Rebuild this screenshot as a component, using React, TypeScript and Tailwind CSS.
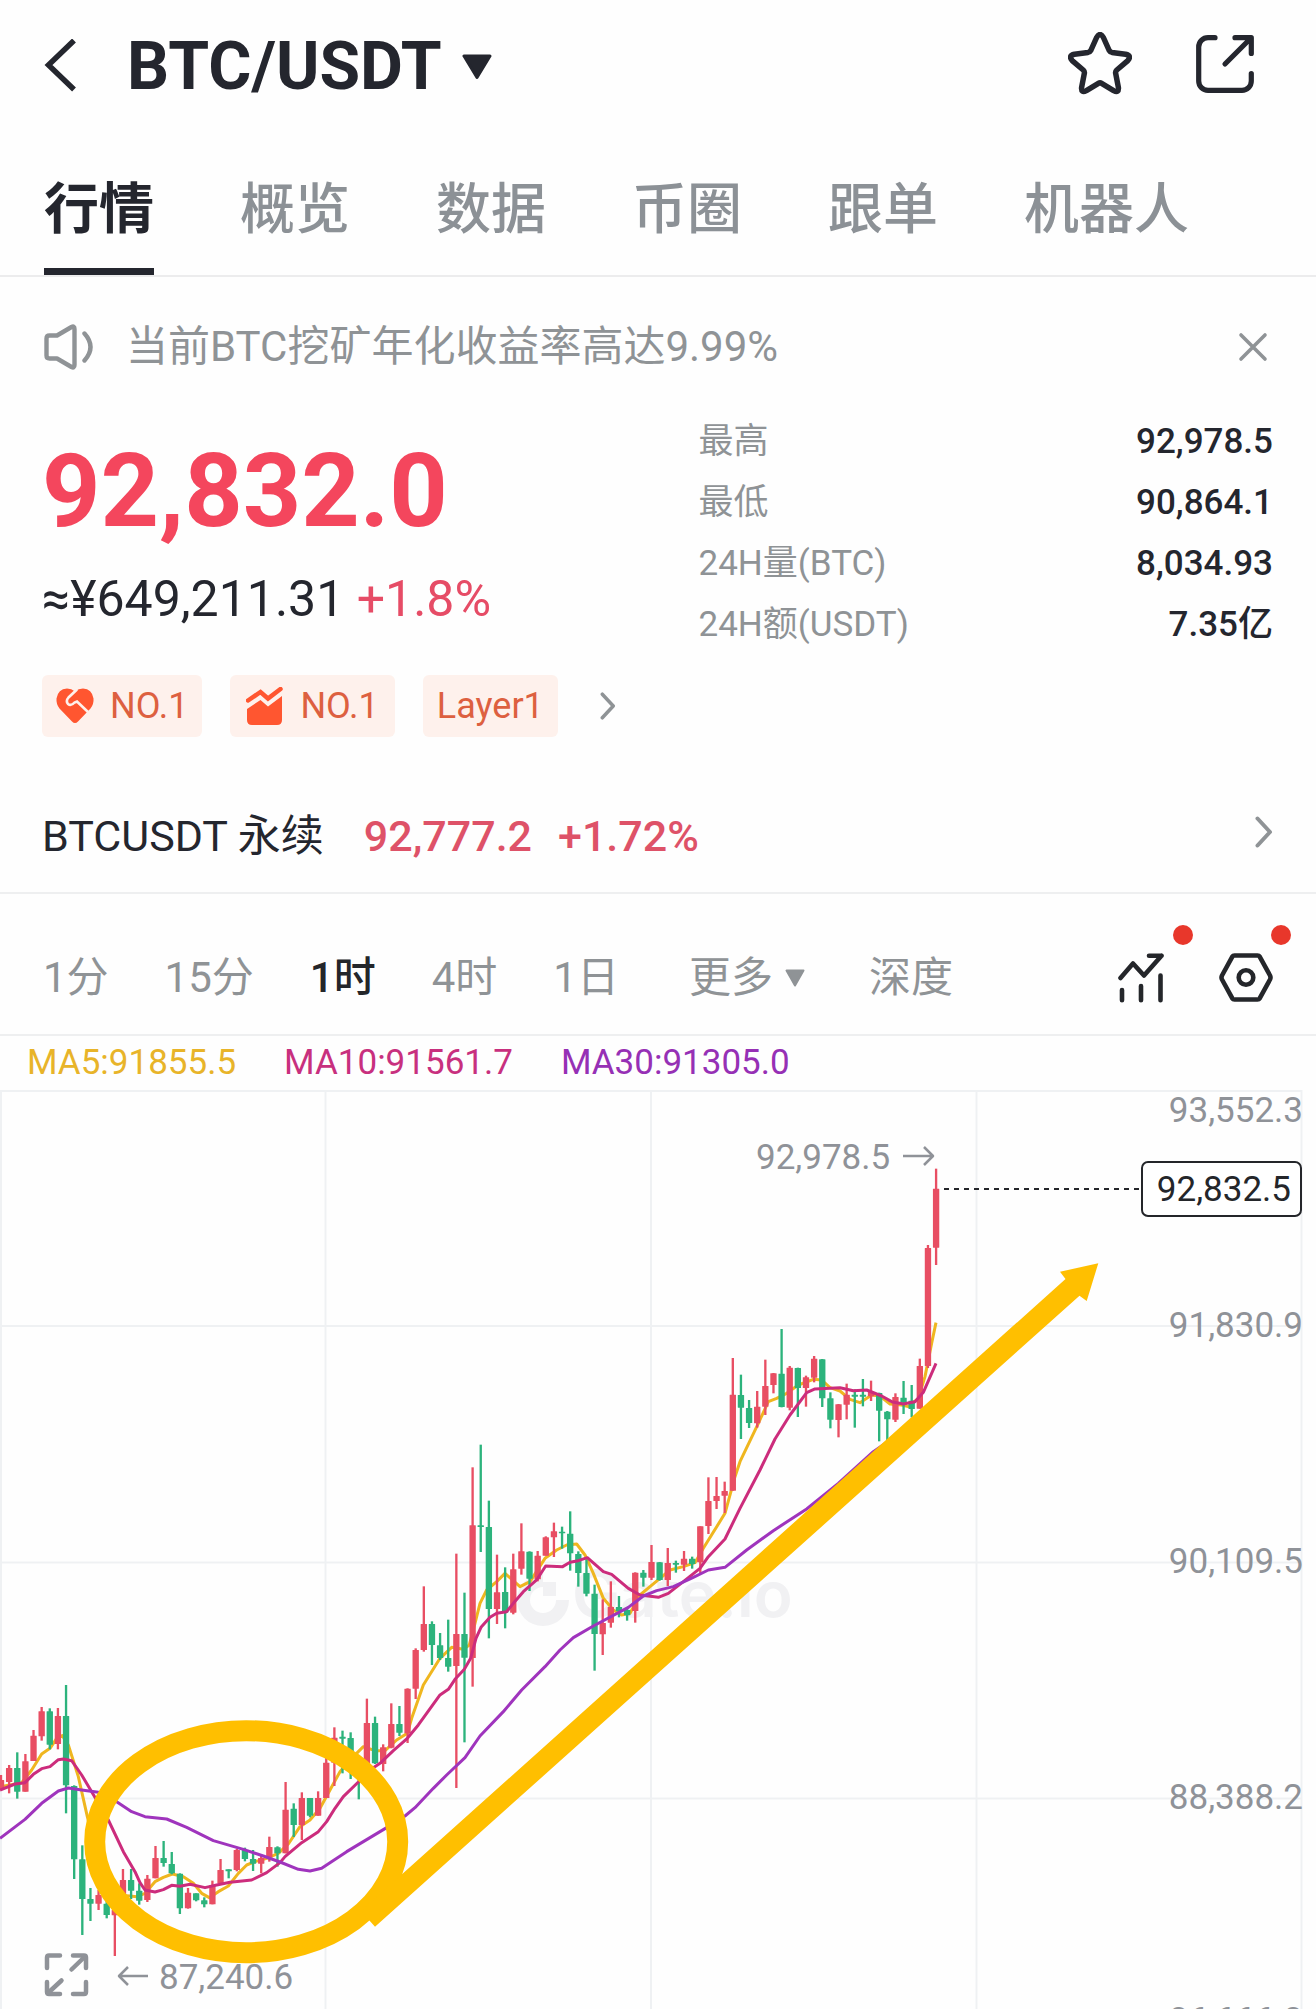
import { useState } from "react";

type Candle = [kind: "up" | "down", high: number, top: number, bottom: number, low: number];

const TABS = ["行情", "概览", "数据", "币圈", "跟单", "机器人"];
const PERIODS = ["1分", "15分", "1时", "4时", "1日"];

const STATS = [
  { label: "最高", value: "92,978.5" },
  { label: "最低", value: "90,864.1" },
  { label: "24H量(BTC)", value: "8,034.93" },
  { label: "24H额(USDT)", value: "7.35亿" },
];

const AXIS = [
  { label: "93,552.3", y: 32 },
  { label: "91,830.9", y: 247 },
  { label: "90,109.5", y: 483 },
  { label: "88,388.2", y: 719 },
  { label: "86,666.8", y: 942 },
];

// Candle and line data are kept in thirds of a chart unit.
const CANDLES: Candle[] = [
  ["up", 2055, 2070, 2098, 2100],
  ["up", 2025, 2034, 2076, 2110],
  ["down", 1987, 2034, 2105, 2126],
  ["up", 1992, 2014, 2105, 2105],
  ["up", 1920, 1937, 2013, 2013],
  ["up", 1851, 1864, 1939, 1952],
  ["down", 1855, 1864, 1964, 1978],
  ["up", 1854, 1878, 1962, 1978],
  ["down", 1785, 1878, 2086, 2170],
  ["down", 2086, 2088, 2308, 2367],
  ["down", 2266, 2308, 2427, 2535],
  ["down", 2394, 2427, 2441, 2493],
  ["up", 2400, 2415, 2441, 2460],
  ["down", 2430, 2441, 2475, 2485],
  ["up", 2450, 2460, 2476, 2598],
  ["up", 2337, 2370, 2430, 2440],
  ["down", 2337, 2370, 2402, 2427],
  ["down", 2380, 2402, 2432, 2444],
  ["up", 2355, 2366, 2430, 2436],
  ["up", 2268, 2304, 2365, 2365],
  ["down", 2253, 2304, 2319, 2330],
  ["down", 2286, 2322, 2350, 2353],
  ["down", 2350, 2351, 2455, 2472],
  ["up", 2394, 2408, 2455, 2456],
  ["down", 2410, 2410, 2431, 2434],
  ["down", 2422, 2431, 2443, 2452],
  ["up", 2372, 2385, 2443, 2443],
  ["up", 2307, 2340, 2380, 2385],
  ["down", 2338, 2338, 2344, 2365],
  ["up", 2277, 2280, 2340, 2344],
  ["down", 2273, 2280, 2307, 2314],
  ["down", 2280, 2307, 2321, 2343],
  ["up", 2298, 2304, 2321, 2350],
  ["up", 2240, 2271, 2302, 2315],
  ["down", 2269, 2272, 2290, 2330],
  ["up", 2076, 2159, 2290, 2290],
  ["down", 2140, 2156, 2205, 2241],
  ["up", 2107, 2124, 2205, 2250],
  ["down", 2124, 2124, 2177, 2182],
  ["up", 2104, 2124, 2177, 2177],
  ["up", 2000, 2018, 2124, 2124],
  ["up", 1912, 1943, 2018, 2088],
  ["down", 1922, 1940, 1946, 2050],
  ["down", 1927, 1944, 2010, 2067],
  ["down", 2000, 2010, 2050, 2128],
  ["up", 1826, 1899, 2030, 2030],
  ["down", 1880, 1899, 2020, 2022],
  ["up", 1963, 1972, 2022, 2044],
  ["up", 1840, 1902, 1973, 1975],
  ["down", 1848, 1902, 1928, 1938],
  ["up", 1795, 1796, 1930, 1959],
  ["up", 1675, 1680, 1796, 1827],
  ["up", 1489, 1602, 1680, 1685],
  ["down", 1594, 1602, 1665, 1725],
  ["down", 1629, 1666, 1704, 1710],
  ["down", 1589, 1704, 1730, 1745],
  ["up", 1391, 1632, 1728, 2094],
  ["down", 1508, 1632, 1703, 1957],
  ["up", 1132, 1306, 1704, 1790],
  ["down", 1064, 1306, 1311, 1386],
  ["down", 1232, 1311, 1557, 1645],
  ["up", 1394, 1507, 1557, 1602],
  ["down", 1432, 1506, 1568, 1615],
  ["up", 1391, 1438, 1568, 1573],
  ["up", 1300, 1384, 1436, 1454],
  ["down", 1384, 1385, 1466, 1503],
  ["up", 1383, 1397, 1468, 1474],
  ["up", 1339, 1342, 1397, 1397],
  ["up", 1298, 1324, 1342, 1401],
  ["down", 1310, 1325, 1330, 1376],
  ["down", 1264, 1331, 1390, 1442],
  ["down", 1384, 1392, 1449, 1490],
  ["down", 1408, 1449, 1511, 1519],
  ["down", 1484, 1511, 1632, 1742],
  ["up", 1528, 1599, 1633, 1695],
  ["up", 1474, 1551, 1598, 1613],
  ["down", 1518, 1551, 1564, 1582],
  ["down", 1552, 1560, 1576, 1592],
  ["up", 1447, 1448, 1563, 1598],
  ["down", 1440, 1448, 1463, 1490],
  ["up", 1365, 1416, 1463, 1470],
  ["down", 1416, 1417, 1470, 1472],
  ["up", 1374, 1419, 1470, 1488],
  ["down", 1412, 1419, 1424, 1448],
  ["up", 1383, 1406, 1424, 1443],
  ["down", 1400, 1406, 1422, 1436],
  ["up", 1309, 1309, 1417, 1450],
  ["up", 1162, 1233, 1308, 1332],
  ["up", 1161, 1218, 1233, 1257],
  ["up", 1175, 1203, 1217, 1269],
  ["up", 804, 914, 1202, 1202],
  ["down", 854, 915, 953, 1047],
  ["down", 930, 954, 999, 1014],
  ["up", 903, 950, 1000, 1013],
  ["up", 809, 888, 950, 975],
  ["up", 849, 850, 885, 910],
  ["down", 717, 851, 951, 952],
  ["up", 828, 833, 953, 961],
  ["down", 833, 834, 894, 981],
  ["up", 857, 862, 894, 950],
  ["up", 798, 806, 863, 877],
  ["down", 807, 808, 925, 951],
  ["down", 907, 925, 989, 1015],
  ["up", 942, 943, 990, 1042],
  ["up", 881, 914, 944, 988],
  ["down", 898, 914, 920, 1013],
  ["down", 867, 914, 920, 949],
  ["up", 872, 906, 919, 933],
  ["down", 908, 909, 962, 1054],
  ["down", 963, 965, 988, 1050],
  ["up", 910, 921, 989, 996],
  ["down", 873, 923, 938, 972],
  ["down", 885, 932, 957, 982],
  ["up", 806, 828, 956, 956],
  ["up", 465, 474, 828, 834],
  ["up", 236, 296, 473, 525],
];

const MA5 =
  "0,2090 30,2085 65,2078 95,2040 125,1992 150,1975 170,1945 187,1937 205,1965 235,2060 262,2180 290,2290 320,2370 350,2415 390,2418 410,2420 435,2410 465,2375 490,2362 517,2352 550,2360 580,2380 605,2410 628,2423 655,2405 685,2388 715,2350 740,2325 765,2315 800,2305 835,2290 865,2262 900,2210 930,2190 960,2155 990,2100 1020,2045 1045,2015 1090,1970 1125,1982 1155,1982 1190,1950 1222,1930 1235,1885 1270,1785 1320,1705 1355,1672 1390,1678 1408,1665 1425,1600 1440,1540 1460,1500 1490,1475 1515,1450 1560,1490 1590,1475 1635,1405 1670,1380 1700,1365 1730,1362 1755,1395 1780,1450 1810,1525 1840,1560 1865,1575 1890,1570 1920,1515 1950,1490 1980,1465 2010,1440 2050,1430 2085,1418 2110,1375 2175,1270 2205,1160 2220,1115 2275,1000 2305,935 2330,925 2360,910 2395,885 2440,868 2465,870 2490,893 2520,903 2550,928 2580,938 2615,915 2640,918 2670,942 2705,945 2725,950 2755,925 2775,860 2795,760 2808,698";
const MA10 =
  "0,2100 45,2082 75,2078 100,2053 125,2036 150,2030 175,2009 190,2007 215,2012 245,2055 275,2105 325,2190 370,2285 405,2345 420,2378 435,2400 465,2406 490,2399 515,2386 540,2389 570,2383 615,2393 650,2385 690,2377 755,2370 800,2348 840,2318 855,2300 905,2258 955,2225 980,2195 1005,2155 1030,2120 1075,2076 1110,2040 1140,2020 1180,1982 1222,1945 1255,1905 1320,1815 1345,1798 1365,1768 1393,1738 1412,1705 1428,1645 1443,1612 1470,1582 1490,1570 1520,1565 1540,1540 1570,1505 1610,1470 1637,1428 1688,1430 1710,1417 1735,1412 1762,1403 1810,1445 1835,1453 1885,1495 1920,1515 1975,1522 2005,1510 2050,1475 2100,1435 2125,1400 2175,1347 2220,1255 2280,1140 2325,1047 2370,975 2420,908 2445,897 2520,893 2560,902 2600,900 2645,918 2675,935 2710,942 2745,935 2770,907 2808,820";
const MA30 =
  "0,2245 75,2188 125,2140 175,2103 205,2094 245,2100 295,2107 350,2135 395,2165 435,2180 500,2187 560,2212 640,2252 730,2278 790,2298 840,2316 895,2338 930,2343 965,2335 1040,2285 1160,2213 1215,2178 1245,2153 1300,2095 1340,2055 1395,2003 1440,1938 1510,1865 1565,1800 1635,1730 1680,1680 1720,1643 1780,1608 1885,1552 1930,1518 1970,1502 2020,1490 2080,1462 2125,1440 2175,1432 2240,1380 2320,1322 2420,1257 2515,1180 2620,1085 2700,1030 2808,950";

function ChevronRight({ className }: { className: string }) {
  return (
    <svg className={className} viewBox="0 0 18 32" fill="none" stroke="currentColor" strokeWidth="4" strokeLinecap="round" strokeLinejoin="round">
      <path d="M2.5 2.5 15 16 2.5 29.5" />
    </svg>
  );
}

function Header() {
  return (
    <header className="flex items-center justify-between h-[132px] pl-11 pr-[62px]">
      <div className="flex items-center">
        <button aria-label="返回">
          <svg className="block w-8 h-[54px]" viewBox="0 0 32 54" fill="none" stroke="currentColor" strokeWidth="5.5">
            <path d="M30 1.5 4.5 26 30 50.5" />
          </svg>
        </button>
        <button className="flex items-center gap-5 pt-0.5 ml-[51px] text-[66px] leading-[80px] font-bold">
          BTC/USDT
          <svg className="block w-[30px] h-[26px]" viewBox="0 0 30 26" fill="currentColor" stroke="currentColor" strokeWidth="3" strokeLinejoin="round">
            <path d="M2 2H28L15 23.5Z" />
          </svg>
        </button>
      </div>
      <div className="flex items-center gap-16 pb-1">
        <button aria-label="收藏">
          <svg className="block w-16 h-16" viewBox="0 0 64 64" fill="none" stroke="currentColor" strokeWidth="5.5" strokeLinejoin="round">
            <path d="M28.6 5.5Q32 -.5 35.4 5.5L41.2 18.5Q42 20 44 20.4L57.5 22.2Q64 23.5 59.8 28.6L48.8 38Q47.4 39.3 47.6 41L50.4 55.5Q51 61.5 45.6 58.6L33.6 51.3Q32 50.3 30.4 51.3L18.4 58.6Q13 61.5 13.6 55.5L16.4 41Q16.6 39.3 15.2 38L4.2 28.6Q0 23.5 6.5 22.2L20 20.4Q22 20 22.8 18.5Z" />
          </svg>
        </button>
        <button aria-label="分享">
          <svg className="block w-[58px] h-[58px]" viewBox="0 0 58 58" fill="none" stroke="currentColor" strokeWidth="5.2" strokeLinecap="round" strokeLinejoin="round">
            <path d="M19 2.7H12A9.3 9.3 0 0 0 2.7 12V46A9.3 9.3 0 0 0 12 55.3H46A9.3 9.3 0 0 0 55.3 46V38.5" />
            <path d="M39 2.7H55.3V18.5M54 4 29 29" />
          </svg>
        </button>
      </div>
    </header>
  );
}

function Tabs() {
  const [active, setActive] = useState("行情");
  return (
    <nav className="flex gap-[86px] px-11 border-b-2 border-[#ececed]">
      {TABS.map((tab) => (
        <button
          key={tab}
          onClick={() => setActive(tab)}
          className={
            tab === active
              ? "pt-10 pb-[22px] text-[55px] leading-[74px] font-bold border-b-[7px] border-[#24262e]"
              : "pt-10 pb-[22px] text-[55px] leading-[74px] font-medium text-[#8c9196] border-b-[7px] border-transparent"
          }
        >
          {tab}
        </button>
      ))}
    </nav>
  );
}

function Notice() {
  return (
    <div className="flex items-center pt-10 pl-11 pr-12 text-[#8f9396]">
      <svg className="w-[50px] h-[46px]" viewBox="0 0 50 46" fill="none" stroke="currentColor" strokeWidth="4.4" strokeLinecap="round" strokeLinejoin="round">
        <path d="M13 11.5H5.5Q2.5 11.5 2.5 14.5V31.5Q2.5 34.5 5.5 34.5H13L27.5 43Q30.5 44.5 30.5 41V5Q30.5 1.5 27.5 3Z" />
        <path d="M40.5 9.5Q52.5 23 40.5 36.5" />
      </svg>
      <p className="flex-1 ml-8 text-[42px] leading-[60px]">当前BTC挖矿年化收益率高达9.99%</p>
      <button aria-label="关闭">
        <svg className="block w-[30px] h-[30px]" viewBox="0 0 30 30" fill="none" stroke="currentColor" strokeWidth="3.6" strokeLinecap="round">
          <path d="M3 3 27 27M27 3 3 27" />
        </svg>
      </button>
    </div>
  );
}

function Quote() {
  return (
    <section className="pt-[34px] pl-[42px] pr-[43px]">
      <div className="grid grid-cols-[8fr_7fr]">
        <div className="pt-7">
          <p className="text-[102px] leading-[104px] font-bold text-[#f4465d]">92,832.0</p>
          <p className="mt-[26px] text-[50px] leading-[60px]">
            ≈¥649,211.31 <span className="text-[#e64c66]">+1.8%</span>
          </p>
        </div>
        <dl className="text-[35px] leading-[61px]">
          {STATS.map((s) => (
            <div key={s.label} className="flex justify-between">
              <dt className="text-[#8f9396]">{s.label}</dt>
              <dd className="font-medium">{s.value}</dd>
            </div>
          ))}
        </dl>
      </div>
      <div className="flex items-center gap-7 mt-5 text-[36px] leading-[62px] text-[#dd6040]">
        <span className="flex items-center gap-4 px-[14px] rounded-md bg-[#fef1ec]">
          <svg className="w-[38px] h-[36px]" viewBox="0 0 38 36" fill="none">
            <path d="M19 35Q17.5 35 16 33.5L3.5 20.5Q0 16 .5 10.5Q2 1 11 .5Q15.5 .5 19 3.5Q22.5 .5 27 .5Q36 1 37.5 10.5Q38 16 34.5 20.5L22 33.5Q20.5 35 19 35Z" fill="#ff5630" />
            <path d="M21 1.5 12.5 9.5Q9.5 13 12 16Q15 18.5 18.5 14.5L21 13.5 32 24" stroke="#fef1ec" strokeWidth="2.6" />
          </svg>
          NO.1
        </span>
        <span className="flex items-center gap-4 px-4 rounded-md bg-[#fef1ec]">
          <svg className="w-[38px] h-[38px]" viewBox="0 0 38 38" fill="#ff5630">
            <path d="M2 13.5 14.5 5 22 11.5 34.5 2" fill="none" stroke="#ff5630" strokeWidth="4.5" strokeLinecap="round" />
            <path d="M1 22 14.5 13 22 19.5 36 9V33Q36 38 31 38H6Q1 38 1 33Z" />
          </svg>
          NO.1
        </span>
        <span className="px-[14px] rounded-md bg-[#fef1ec]">Layer1</span>
        <button aria-label="更多标签" className="ml-[14px] text-[#8f9396]">
          <ChevronRight className="block w-4 h-7" />
        </button>
      </div>
    </section>
  );
}

function PerpetualRow() {
  return (
    <a href="#perpetual" className="flex items-center pt-[69px] pb-[26px] pl-[42px] pr-[43px] border-b-2 border-[#eeeff0] text-[43px] leading-[60px]">
      <span>BTCUSDT 永续</span>
      <span className="ml-10 font-medium text-[#de5268]">92,777.2</span>
      <span className="ml-[26px] font-medium text-[#de5268]">+1.72%</span>
      <ChevronRight className="ml-auto mb-2 w-[18px] h-8 text-[#8f9396]" />
    </a>
  );
}

function Toolbar() {
  const [period, setPeriod] = useState("1时");
  return (
    <div className="flex items-center pt-[54px] pb-[26px] pl-[43px] pr-[43px] border-b-2 border-[#eeeff0] text-[42px] leading-[60px] text-[#8f9396]">
      <div className="flex gap-14">
        {PERIODS.map((p) => (
          <button
            key={p}
            onClick={() => setPeriod(p)}
            className={p === period ? "font-medium text-[#24262a]" : ""}
          >
            {p}
          </button>
        ))}
      </div>
      <button className="flex items-center gap-3 ml-[70px]">
        更多
        <svg className="w-5 h-[18px]" viewBox="0 0 20 18" fill="currentColor" stroke="currentColor" strokeWidth="2" strokeLinejoin="round">
          <path d="M1.5 1.5H18.5L10 16.5Z" />
        </svg>
      </button>
      <button className="ml-16">深度</button>
      <div className="flex items-center gap-[55px] ml-auto text-[#24262a]">
        <button aria-label="指标" className="relative">
          <svg className="block w-[46px] h-[50px]" viewBox="0 0 46 50" fill="none" stroke="currentColor" strokeWidth="4.6" strokeLinecap="round" strokeLinejoin="round">
            <path d="M2.5 25 15 10.5 26 22.5 43.5 2.8M31 2.8H43.5" />
            <path d="M4 37V47.2M23 33V47.2M42.5 22.5V47.2" />
          </svg>
          <span className="absolute -top-7 -right-[29px] size-5 rounded-full bg-[#e8372b]" />
        </button>
        <button aria-label="设置" className="relative">
          <svg className="block w-[54px] h-[50px]" viewBox="0 0 54 50" fill="none" stroke="currentColor" strokeWidth="4.6" strokeLinejoin="round">
            <path d="M15.5 2.5H38.5Q40 2.5 40.8 3.8L51 22.500Q52 24.500 51 26.500L40.8 45.200Q40 46.500 38.500 46.500H15.500Q14 46.500 13.200 45.200L3 26.500Q2 24.500 3 22.500L13.200 3.800Q14 2.500 15.500 2.500Z" />
            <circle cx="27" cy="24.5" r="7.3" />
          </svg>
          <span className="absolute -top-7 -right-[18px] size-5 rounded-full bg-[#e8372b]" />
        </button>
      </div>
    </div>
  );
}

function Chart() {
  return (
    <svg className="block w-full text-[35px]" viewBox="0 0 1316 920" role="img" aria-label="BTC/USDT 1小时K线">
      <g stroke="#eff1f3" strokeWidth="2">
        <path d="M0 1H1302M0 236H1302M0 472.5H1302M0 708.5H1302" />
        <path d="M1 0V920M325.5 0V920M651 0V920M976.5 0V920M1301.5 0V920" />
      </g>

      <g fill="#f1f1f3">
        <path d="M543 484A26 26 0 1 0 569 510H556A13 13 0 1 1 543 497Z" />
        <path d="M543 492H556V506H543Z" />
        <text x="572" y="527" className="font-['Inter',sans-serif] text-[64px] font-semibold">Gate.io</text>
      </g>

      <g transform="scale(.33333)">
        <polyline points={MA5} fill="none" stroke="#efb61f" strokeWidth="9" strokeLinejoin="round" />
        {CANDLES.map(([kind, high, top, bottom, low], i) => {
          const x = 3 + i * 24.394;
          return (
            <g key={i} fill={kind === "up" ? "#e84e63" : "#2cb37c"}>
              <rect x={x - 3.5} y={high} width="7" height={low - high} />
              <rect x={x - 9.5} y={top} width="19" height={bottom - top} rx="1" />
            </g>
          );
        })}
        <polyline points={MA10} fill="none" stroke="#cc2c7c" strokeWidth="9" strokeLinejoin="round" />
        <polyline points={MA30} fill="none" stroke="#9f34bd" strokeWidth="9" strokeLinejoin="round" />
      </g>

      <path d="M944 99H1141" stroke="#24262a" strokeWidth="2" strokeDasharray="5 5" />
      <ellipse cx="246.2" cy="751.7" rx="151.5" ry="111" fill="none" stroke="#ffbf00" strokeWidth="21" />
      <path d="M361 821 1065.5 189 1060 181.7 1098.3 173.3 1086.7 211 1079.5 205.7 375 836.7Z" fill="#ffbf00" />

      <g fill="#8f9298">
        {AXIS.map((a) => (
          <text key={a.label} x="1303" y={a.y} textAnchor="end">{a.label}</text>
        ))}
        <text x="756" y="79">92,978.5</text>
        <text x="159" y="899">87,240.6</text>
      </g>
      <g fill="none" stroke="#8f9298" strokeWidth="2.5" strokeLinejoin="round">
        <path d="M903 66H933M924 57 933 66 924 75" />
        <path d="M148 886H119M128 877 119 886 128 895" />
      </g>

      <rect x="1142" y="72" width="159" height="54" rx="6" fill="#fff" stroke="#24262a" strokeWidth="2" />
      <text x="1291" y="111" textAnchor="end" fill="#24262a">92,832.5</text>

      <g fill="none" stroke="#8f9298" strokeWidth="4.5" strokeLinecap="round" strokeLinejoin="round">
        <path d="M60 865.5H49Q47 865.5 47 867.5V878M73 865.5H84Q86 865.5 86 867.5V878M60 904H49Q47 904 47 902V892M73 904H84Q86 904 86 902V892" />
        <path d="M71.5 879.5 85 866.5M61.5 890.5 48 903" />
      </g>
    </svg>
  );
}

export default function App() {
  return (
    <main lang="zh-CN" className="bg-[#fefefe] text-[#24262e] font-['Roboto','Noto_Sans_CJK_SC',sans-serif] overflow-hidden">
      <Header />
      <Tabs />
      <Notice />
      <Quote />
      <PerpetualRow />
      <Toolbar />
      <div className="flex gap-12 pl-[27px] text-[35px] leading-[54px]">
        <span className="text-[#e8b429]">MA5:91855.5</span>
        <span className="text-[#c8307e]">MA10:91561.7</span>
        <span className="text-[#9630b5]">MA30:91305.0</span>
      </div>
      <Chart />
    </main>
  );
}
